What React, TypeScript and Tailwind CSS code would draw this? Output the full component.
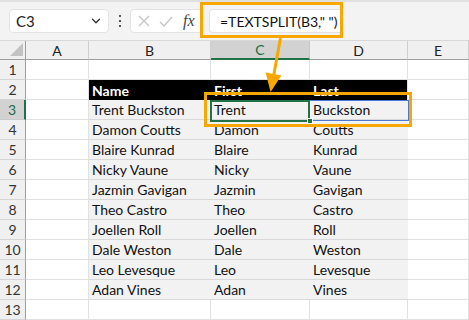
import { ChevronDown } from "lucide-react"

const people = [
  ["Trent Buckston", "Trent", "Buckston"],
  ["Damon Coutts", "Damon", "Coutts"],
  ["Blaire Kunrad", "Blaire", "Kunrad"],
  ["Nicky Vaune", "Nicky", "Vaune"],
  ["Jazmin Gavigan", "Jazmin", "Gavigan"],
  ["Theo Castro", "Theo", "Castro"],
  ["Joellen Roll", "Joellen", "Roll"],
  ["Dale Weston", "Dale", "Weston"],
  ["Leo Levesque", "Leo", "Levesque"],
  ["Adan Vines", "Adan", "Vines"],
]

const cols = ["A", "B", "C", "D", "E"]

const RowHead = ({ n }: { n: number }) => (
  <div
    className={
      n === 3
        ? "flex h-[20px] items-center justify-center border-b border-r-2 border-b-[#c9c9c9] border-r-[#217346] bg-[#d2d2d2] text-[14px] text-[#1e6b43]"
        : "flex h-[20px] items-center justify-center border-b border-r border-b-[#d4d4d4] border-r-[#9e9e9e] bg-[#f0f0f0] text-[14px] text-[#333]"
    }
  >
    {n}
  </div>
)

const Blank = () => <div className="h-[20px] border-b border-r border-[#e1e1e1] bg-white" />

const App = () => {
  return (
    <div className="relative h-[320px] w-[469px] overflow-hidden bg-white font-['Lato',sans-serif] text-black">
      {/* formula bar */}
      <div className="flex h-[41px] items-center border-t-2 border-b border-t-[#e0e0e0] border-b-[#d8d8d8] bg-[#f3f3f3] pl-[9px]">
        <div className="flex h-[24px] w-[100px] items-center justify-between rounded-[4px] border border-[#e3e3e3] bg-white pl-[6px] pr-[5px] text-[15px] text-[#222]">
          <span>C3</span>
          <ChevronDown size={14} strokeWidth={2.2} className="text-[#333]" />
        </div>
        <div className="flex w-[21px] flex-col items-center gap-[3px]">
          <span className="h-[2px] w-[2px] bg-[#555]" />
          <span className="h-[2px] w-[2px] bg-[#555]" />
          <span className="h-[2px] w-[2px] bg-[#555]" />
        </div>
        <div className="flex h-[24px] w-[71px] items-center rounded-l-[4px] border border-[#e3e3e3] bg-white pl-[7px]">
          <svg width="12" height="12" viewBox="0 0 12 12" className="mr-[9px]">
            <path d="M1 1 L11 11 M11 1 L1 11" stroke="#c4c4c4" strokeWidth="1.3" fill="none" />
          </svg>
          <svg width="14" height="11" viewBox="0 0 14 11" className="mr-[10px]">
            <path d="M1 6 L5 10 L13 1" stroke="#c4c4c4" strokeWidth="1.3" fill="none" />
          </svg>
          <span className="font-['Liberation_Serif',serif] text-[16px] italic leading-none text-[#444]">fx</span>
        </div>
        <div className="ml-[8px] flex h-[24px] w-[134px] items-center overflow-hidden whitespace-nowrap rounded-l-[4px] border border-r-0 border-[#e3e3e3] bg-white pl-[10px] text-[14px] text-[#111]">
          =TEXTSPLIT(B3," ")
        </div>
      </div>

      {/* sheet */}
      <div className="grid grid-cols-[26px_63px_122px_99px_98px_61px]">
        <div className="relative h-[19px] border-b border-r border-[#9e9e9e] bg-[#f0f0f0]">
          <svg width="26" height="19" viewBox="0 0 26 19" className="absolute left-0 top-0">
            <path d="M10 15 L23 15 L23 2 Z" fill="#c2c2c2" />
          </svg>
        </div>
        {cols.map((c) => (
          <div
            key={c}
            className={
              c === "C"
                ? "flex h-[19px] items-center justify-center border-b-2 border-r border-b-[#217346] border-r-[#c6c6c6] bg-[#d2d2d2] text-[14px] text-[#1e6b43]"
                : "flex h-[19px] items-center justify-center border-b border-r border-b-[#9e9e9e] border-r-[#cfcfcf] bg-[#f0f0f0] text-[14px] text-[#222]"
            }
          >
            {c}
          </div>
        ))}

        <RowHead n={1} />
        <Blank />
        <Blank />
        <Blank />
        <Blank />
        <Blank />

        <RowHead n={2} />
        <Blank />
        <div className="flex h-[20px] items-center bg-black pl-[3px] text-[14px] font-bold text-white">Name</div>
        <div className="flex h-[20px] items-center bg-black pl-[3px] text-[14px] font-bold text-white">First</div>
        <div className="flex h-[20px] items-center border-r border-[#e1e1e1] bg-black pl-[3px] text-[14px] font-bold text-white">Last</div>
        <Blank />

        {people.map((p, i) => (
          <div key={p[0]} className="contents">
            <RowHead n={i + 3} />
            <Blank />
            {p.map((t, j) => (
              <div
                key={j}
                className="flex h-[20px] items-center border-b border-[#d9d9d9] bg-[#f2f2f2] pl-[3px] text-[14px] text-[#111]"
              >
                {t}
              </div>
            ))}
            <Blank />
          </div>
        ))}

        <RowHead n={13} />
        <Blank />
        <Blank />
        <Blank />
        <Blank />
        <Blank />
      </div>

      {/* selection + spill range */}
      <div className="absolute left-[211px] top-[100px] h-[21px] w-[198px] border border-[#4a7bd0]" />
      <div className="absolute left-[210px] top-[100px] h-[22px] w-[100px] border-2 border-[#217346]" />
      <div className="absolute left-[307px] top-[118px] h-[6px] w-[6px] border border-white bg-[#217346]" />

      {/* callouts */}
      <div className="absolute left-[200px] top-[2px] h-[36px] w-[143px] border-[3px] border-[#f6a800]" />
      <div className="absolute left-[204px] top-[92px] h-[35px] w-[208px] border-[3px] border-[#f6a800]" />
      <svg width="469" height="320" className="pointer-events-none absolute left-0 top-0">
        <line x1="280.5" y1="38" x2="273.6" y2="76" stroke="#f6a800" strokeWidth="3" />
        <path d="M265.6 72.6 L281.4 75.4 L270.6 92 Z" fill="#f6a800" />
      </svg>
    </div>
  )
}

export default App
